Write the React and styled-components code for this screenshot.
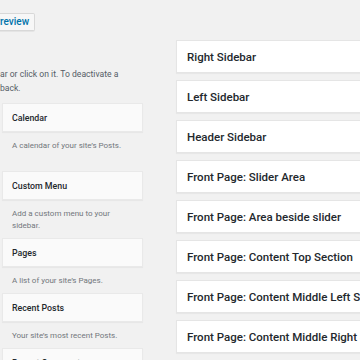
import React from "react";
import styled, { createGlobalStyle } from "styled-components";

const GlobalStyle = createGlobalStyle`
  html, body {
    margin: 0;
    padding: 0;
    background: #f1f1f1;
    overflow: hidden;
  }
  body {
    font-family: Roboto, "Open Sans", sans-serif;
    color: #23282d;
  }
`;

const Page = styled.div`
  display: flex;
  width: 360px;
  height: 360px;
  overflow: hidden;
`;

const AvailableColumn = styled.div`
  width: 145px;
  flex-shrink: 0;
  padding-top: 13px;
`;

const PreviewButton = styled.button`
  display: block;
  height: 18px;
  margin-left: -27px;
  padding: 0 5px 0 0;
  border: 1px solid #d8d8d8;
  border-left: none;
  border-radius: 0 2px 2px 0;
  background: #f7f7f7;
  color: #0073aa;
  font-family: inherit;
  font-size: 10px;
  font-weight: 500;
  line-height: 16px;
  box-shadow: 0 1px 0 #e4e4e4;
`;

const Hint = styled.p`
  margin: 36px 0 8px;
  font-size: 8.6px;
  line-height: 14px;
  color: #555d66;
  white-space: nowrap;
`;

const WidgetList = styled.div`
  display: flex;
  flex-direction: column;
`;

const WidgetCard = styled.div`
  height: 29px;
  margin-left: 2px;
  width: 141px;
  box-sizing: border-box;
  padding: 0 9px;
  display: flex;
  align-items: center;
  background: #fafafa;
  border: 1px solid #e9e9e9;
  box-shadow: 0 1px 1px rgba(0, 0, 0, 0.04);
  font-size: 8.8px;
  font-weight: 500;
  color: #23282d;
`;

const WidgetDescription = styled.div`
  box-sizing: border-box;
  min-height: ${(p) => p.$minHeight || 26}px;
  width: 141px;
  padding: 8px 10px 6px 12px;
  font-size: 8px;
  line-height: 12px;
  color: #72777c;
`;

const SidebarColumn = styled.div`
  margin-left: 31px;
  padding-top: 40px;
  display: flex;
  flex-direction: column;
  gap: 7px;
  flex: 1;
`;

const SidebarCard = styled.div`
  height: 33px;
  width: 200px;
  box-sizing: border-box;
  padding: 0 10px;
  display: flex;
  align-items: center;
  background: #fff;
  border: 1px solid #e5e5e5;
  border-right: none;
  box-shadow: 0 1px 1px rgba(0, 0, 0, 0.04);
  font-size: 11.5px;
  font-weight: 500;
  white-space: nowrap;
  color: #23282d;
`;

const widgets = [
  { name: "Calendar", desc: "A calendar of your site\u2019s Posts.", minHeight: 39 },
  { name: "Custom Menu", desc: "Add a custom menu to your sidebar." },
  { name: "Pages", desc: "A list of your site\u2019s Pages." },
  { name: "Recent Posts", desc: "Your site\u2019s most recent Posts." },
  { name: "Recent Comments", desc: "" },
];

const sidebars = [
  "Right Sidebar",
  "Left Sidebar",
  "Header Sidebar",
  "Front Page: Slider Area",
  "Front Page: Area beside slider",
  "Front Page: Content Top Section",
  "Front Page: Content Middle Left Section",
  "Front Page: Content Middle Right Section",
];

const App = () => {
  return (
    <Page>
      <GlobalStyle />
      <AvailableColumn>
        <PreviewButton>Live Preview</PreviewButton>
        <Hint>
          ar or click on it. To deactivate a
          <br />
          back.
        </Hint>
        <WidgetList>
          {widgets.map((w) => (
            <React.Fragment key={w.name}>
              <WidgetCard>{w.name}</WidgetCard>
              <WidgetDescription $minHeight={w.minHeight}>{w.desc}</WidgetDescription>
            </React.Fragment>
          ))}
        </WidgetList>
      </AvailableColumn>
      <SidebarColumn>
        {sidebars.map((s) => (
          <SidebarCard key={s}>{s}</SidebarCard>
        ))}
      </SidebarColumn>
    </Page>
  );
};

export default App;
